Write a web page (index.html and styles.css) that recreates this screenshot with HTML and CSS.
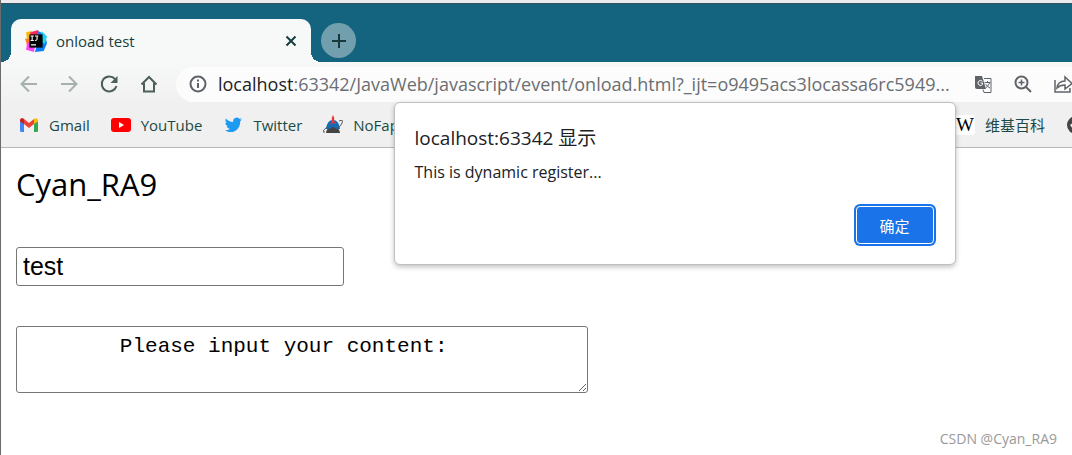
FILE: index.html
```
<!DOCTYPE html>
<html lang="zh-CN">
<head>
  <meta charset="UTF-8" />
  <title>onload test</title>
  <meta name="viewport" content="width=device-width, initial-scale=1.0" />
  <link rel="stylesheet" href="styles.css">
</head>
<body>
  <div class="browser">
    <header class="tab-strip">
      <div class="tab">
        <svg class="favicon" viewBox="0 0 20 20">
          <path fill="#fdb60d" d="M1 2 6 1 8 10 2 11z" />
          <path fill="#fe2857" d="M5 2 12 0 13 8 3 12z" />
          <path fill="#fc801d" d="M0 8 5 8 6 14 2 14z" />
          <path fill="#ff45ed" d="M2 11 10 12 8 20 1 18z" />
          <path fill="#087cfa" d="M12 1 18 4 20 12 17 19 9 20 12 10z" />
          <path fill="#21d0f5" d="M15 1 20 6 18 13 15 10z" />
          <path d="M4 4h12v12H4z" />
          <path fill="none" stroke="#fff" d="M5 5.500h3M6.500 5.500v4M5 9.500h3M9 5.500h3M11 5v3.500q0 1-2 1M5.500 13.500H10" />
        </svg>
        <span class="tab-title">onload test</span>
        <button class="close-btn" aria-label="Close tab">
          <svg viewBox="0 0 12 12"><path d="M1.500 1.500l9 9M10.500 1.500l-9 9" /></svg>
        </button>
      </div>
      <button class="new-tab" aria-label="New tab">
        <svg viewBox="0 0 16 16"><path d="M8 1v14M1 8h14" /></svg>
      </button>
    </header>

    <nav class="toolbar">
      <button class="nav-btn faded" aria-label="Back">
        <svg viewBox="0 0 20 20"><path d="M18 10H3M10 2.500 2.500 10l7.500 7.500" /></svg>
      </button>
      <button class="nav-btn faded" aria-label="Forward">
        <svg viewBox="0 0 20 20"><path d="M2 10h15M10 2.500 17.500 10 10 17.500" /></svg>
      </button>
      <button class="nav-btn" aria-label="Reload">
        <svg viewBox="0 0 20 20"><path d="M16 5a7.500 7.500 0 1 0 1.500 7" /><path class="solid" d="M18.500 2v7h-7z" /></svg>
      </button>
      <button class="nav-btn" aria-label="Home">
        <svg viewBox="0 0 20 20"><path d="M2.500 10.500 10 3l7.500 7.500M5 9v8.500h10V9" /></svg>
      </button>
      <div class="address-bar">
        <svg class="bar-icon" viewBox="0 0 20 20"><circle cx="10" cy="10" r="7.500" /><path d="M10 9v5M10 5.500v2" /></svg>
        <span class="url"><span class="host">localhost</span>:63342/JavaWeb/javascript/event/onload.html?_ijt=o9495acs3locassa6rc5949...</span>
        <svg class="bar-icon" viewBox="0 0 20 20">
          <path class="solid" d="M2 2h7l4 13H4q-2 0-2-2z" />
          <path class="thin" d="M11 4.500h7v14H11l-1-3" />
          <path class="cut" d="M9.500 7.500a2.500 2.500 0 1 0 0 3V9H7.500" />
          <path class="thin" d="M11.500 8.500h6M14.500 7v1.500M12.500 10q2 3 4.500 4M16.500 9q-1 3-4 5" />
        </svg>
        <svg class="bar-icon" viewBox="0 0 20 20"><circle cx="8.500" cy="8.500" r="6" /><path d="M13 13l5 5" /><path class="mid" d="M8.500 5.500v6M5.500 8.500h6" /></svg>
        <svg class="bar-icon" viewBox="0 0 20 20"><path class="mid" d="M2 6v12h15v-4M4 14q1-7 8-7V3l7 6.500-7 5.500v-4q-5 0-8 3z" /></svg>
      </div>
    </nav>

    <nav class="bookmarks">
      <a class="bookmark" href="#">
        <svg viewBox="0 0 20 20">
          <path fill="#4285f4" d="M1 5v10.500q0 1.500 1.500 1.500H5V8z" />
          <path fill="#34a853" d="M15 8v9h2.500q1.500 0 1.500-1.500V5z" />
          <path fill="#ea4335" d="M1 5.500V5q1-3 4-1l5 4 5-4v5l-5 4-5-4z" />
          <path fill="#c5221f" d="M1 5q1-3 4-1v5L1 6.500z" />
          <path fill="#fbbc04" d="M15 4q3-2 4 1v1.500L15 9z" />
        </svg>
        <span>Gmail</span>
      </a>
      <a class="bookmark" href="#">
        <svg viewBox="0 0 20 20"><rect y="3" width="20" height="14" rx="3" fill="#f00" /><path fill="#fff" d="M8 7l5 3-5 3z" /></svg>
        <span>YouTube</span>
      </a>
      <a class="bookmark" href="#">
        <svg viewBox="-2 -1 27 27"><path fill="#1d9bf0" d="M23.600 4.900c-.8.400-1.800.7-2.700.8 1-.6 1.700-1.500 2.100-2.600-.9.500-1.900.9-3 1.100A4.800 4.800 0 0 0 11.800 8.600C7.900 8.400 4.300 6.500 1.900 3.600.7 5.700 1.300 8.500 3.400 9.900c-.8 0-1.500-.2-2.200-.6 0 2.300 1.600 4.300 3.900 4.800-.7.200-1.400.2-2.200.1.600 1.900 2.400 3.300 4.500 3.300A9.700 9.700 0 0 1 .4 19.500C12.300 26.600 21.600 17.400 21.200 7.400c.9-.7 1.800-1.500 2.400-2.500z" /></svg>
        <span>Twitter</span>
      </a>
      <a class="bookmark" href="#">
        <svg viewBox="0 0 20 20">
          <path fill="#176bb5" d="M3 14q1-9 7-9t7 9z" />
          <path fill="#444" d="M3 18q1-6 4-4 3-4 6 0 3-2 4 4z" />
          <path fill="#e33" d="M10 0q2 3 1 6l2 3-3-1-3 1 2-3q-1-3 1-6z" />
          <path fill="none" stroke="#555" d="M4 12Q-3 18 2 17M16 6q5-2 3 2-1 3-4 5" />
        </svg>
        <span>NoFap</span>
      </a>
      <a class="bookmark wiki" href="#">
        <span class="wiki-icon">W</span>
        <span>维基百科</span>
      </a>
      <a class="bookmark globe" href="#" aria-label="Globe">
        <svg viewBox="0 0 20 20"><circle cx="10" cy="10" r="9" fill="#444" /><path fill="#f0f0f0" d="M4 10l5-4 3 2-3 3 1 4-3-1z" /></svg>
      </a>
    </nav>

    <main class="page">
      <p class="name">Cyan_RA9</p>
      <input class="text-field" type="text" value="test" aria-label="Text" />
      <textarea class="content-field" aria-label="Content">        Please input your content:</textarea>
    </main>
    <div class="watermark">CSDN @Cyan_RA9</div>

    <div class="dialog" role="alertdialog" aria-labelledby="dialog-title">
      <h1 class="dialog-title" id="dialog-title">localhost:63342 显示</h1>
      <p class="dialog-text">This is dynamic register...</p>
      <button class="ok-btn">确定</button>
    </div>
  </div>
</body>
</html>
```
FILE: styles.css
```
* {
  box-sizing: border-box;
}

body {
  margin: 0;
  background-color: #fff;
  font-family: "Open Sans", "Noto Sans CJK SC", sans-serif;
  color: #000;
}

.browser {
  position: relative;
  min-height: 100vh;
  border-left: 1px solid #6b6b6b;
  overflow: hidden;
}

button {
  padding: 0;
  border: none;
  background: none;
  font-family: inherit;
}

svg {
  display: block;
  flex: none;
}

/* Tabs */
.tab-strip {
  display: flex;
  align-items: flex-end;
  height: 62px;
  padding-left: 10px;
  background-color: #14637f;
  border-top: 3px solid #e9ebec;
  box-shadow: inset 0 1px #33515e;
}

.tab {
  position: relative;
  display: flex;
  align-items: center;
  width: 300px;
  height: 43px;
  padding: 0 14px;
  border-radius: 10px 10px 0 0;
  background-color: #f7f8f8;
}

/* Flared feet of the tab */
.tab::before,
.tab::after {
  content: "";
  position: absolute;
  bottom: 0;
  width: 10px;
  height: 10px;
}

.tab::before {
  right: 100%;
  background: radial-gradient(circle at 0 0, #14637f 10px, #f7f8f8 10px);
}

.tab::after {
  left: 100%;
  background: radial-gradient(circle at 100% 0, #14637f 10px, #f7f8f8 10px);
}

.favicon {
  width: 22px;
  height: 22px;
}

.tab-title {
  flex: 1;
  padding-left: 9px;
  font-size: 15px;
  color: #173f3d;
}

.close-btn svg {
  width: 12px;
  height: 12px;
  fill: none;
  stroke: #173f3d;
  stroke-width: 2;
}

.new-tab {
  display: flex;
  align-items: center;
  justify-content: center;
  width: 35px;
  height: 35px;
  margin: 0 0 4px 10px;
  border-radius: 50%;
  background-color: #729fae;
}

.new-tab svg {
  width: 16px;
  height: 16px;
  stroke: #17393b;
  stroke-width: 2;
}

/* Toolbar */
.toolbar {
  display: flex;
  align-items: center;
  gap: 20px;
  height: 44px;
  padding-left: 18px;
  background: linear-gradient(#f7f8f8, #f0f0f0);
}

.nav-btn svg,
.bar-icon {
  width: 20px;
  height: 20px;
  fill: none;
  stroke: #4c5f59;
  stroke-width: 2;
}

.nav-btn.faded svg {
  stroke: #a8b0ae;
}

.nav-btn .solid {
  fill: #4c5f59;
  stroke: none;
}

.address-bar {
  flex: 1;
  display: flex;
  align-items: center;
  gap: 20px;
  min-width: 0;
  height: 35px;
  margin-left: -3px;
  padding-left: 12px;
  border-radius: 18px 0 0 18px;
  background-color: #fcfcfc;
  overflow: hidden;
}

.bar-icon {
  stroke: #5f6368;
}

.bar-icon .solid {
  fill: #5f6368;
  stroke: none;
}

.bar-icon .thin {
  stroke-width: 1;
}

.bar-icon .mid {
  stroke-width: 1.5;
}

.bar-icon .cut {
  stroke: #fff;
  stroke-width: 1;
}

.url {
  flex: none;
  width: 735px;
  margin-left: -10px;
  font-size: 18px;
  white-space: nowrap;
  color: #6b6e72;
}

.url .host {
  color: #202124;
}

/* Bookmarks */
.bookmarks {
  display: flex;
  align-items: center;
  gap: 21px;
  height: 42px;
  padding: 0 0 4px 18px;
  background-color: #f0f0f0;
  border-bottom: 1px solid #b6b8b8;
}

.bookmark {
  display: flex;
  flex: none;
  align-items: center;
  gap: 10px;
  font-size: 15px;
  color: #1b4a46;
  text-decoration: none;
}

.bookmark svg,
.wiki-icon {
  width: 20px;
  height: 20px;
}

.wiki {
  margin-left: auto;
}

.wiki-icon {
  border-radius: 3px;
  background-color: #fff;
  font-family: "Liberation Serif", serif;
  font-size: 19px;
  line-height: 20px;
  text-align: center;
  color: #000;
}

.globe {
  width: 6px;
}

/* Page */
.page {
  display: flex;
  flex-direction: column;
  align-items: flex-start;
  gap: 40px;
  padding: 14px 15px;
}

.name {
  margin: 0;
  font-size: 31px;
  line-height: 45px;
}

.text-field,
.content-field {
  border: 1px solid #767676;
  border-radius: 3px;
  background-color: #fff;
  color: #000;
}

.text-field {
  width: 328px;
  height: 39px;
  padding: 0 6px;
  font-family: "Liberation Sans", sans-serif;
  font-size: 25px;
}

.content-field {
  width: 572px;
  height: 67px;
  padding: 5px 2px;
  font-family: "Liberation Mono", monospace;
  font-size: 21px;
  line-height: 30px;
}

.watermark {
  position: absolute;
  right: 15px;
  bottom: 7px;
  font-size: 14px;
  color: #999;
}

/* Alert */
.dialog {
  position: absolute;
  top: 102px;
  left: 50%;
  display: flex;
  flex-direction: column;
  width: 562px;
  margin-left: -143px;
  padding: 21px 21px 20px 20px;
  border: 1px solid #bfc1c1;
  border-radius: 6px;
  background-color: #fff;
  box-shadow: 0 2px 5px rgba(0, 0, 0, 0.25);
  color: #202124;
}

.dialog-title {
  margin: 0;
  font-size: 19px;
  font-weight: normal;
  line-height: 28px;
}

.dialog-text {
  margin: 9px 0 23px;
  font-size: 16px;
  line-height: 22px;
}

.ok-btn {
  align-self: flex-end;
  width: 78px;
  height: 38px;
  border: 1px solid #fff;
  border-radius: 4px;
  background-color: #1a73e8;
  box-shadow: 0 0 0 2px #1a73e8;
  font-size: 15px;
  color: #fff;
}
```
